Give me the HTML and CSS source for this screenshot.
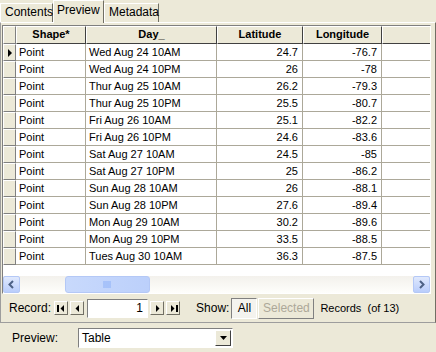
FILE: index.html
```html
<!DOCTYPE html>
<html>
<head>
<meta charset="utf-8">
<link rel="stylesheet" href="styles.css">
</head>
<body>
<div class="tabs">
  <div class="tab">Contents</div>
  <div class="tab sel">Preview</div>
  <div class="tab">Metadata</div>
</div>
<div class="panel">
  <div class="grid">
    <div class="row head">
      <div class="sc hc"></div>
      <div class="hc">Shape*</div>
      <div class="hc">Day_</div>
      <div class="hc">Latitude</div>
      <div class="hc">Longitude</div>
      <div class="hc"></div>
    </div>
    <div class="row"><div class="sc cur"><span class="tri"></span></div><div class="c">Point</div><div class="c">Wed Aug 24 10AM</div><div class="c n">24.7</div><div class="c n">-76.7</div><div class="c"></div></div>
    <div class="row"><div class="sc"></div><div class="c">Point</div><div class="c">Wed Aug 24 10PM</div><div class="c n">26</div><div class="c n">-78</div><div class="c"></div></div>
    <div class="row"><div class="sc"></div><div class="c">Point</div><div class="c">Thur Aug 25 10AM</div><div class="c n">26.2</div><div class="c n">-79.3</div><div class="c"></div></div>
    <div class="row"><div class="sc"></div><div class="c">Point</div><div class="c">Thur Aug 25 10PM</div><div class="c n">25.5</div><div class="c n">-80.7</div><div class="c"></div></div>
    <div class="row"><div class="sc"></div><div class="c">Point</div><div class="c">Fri Aug 26 10AM</div><div class="c n">25.1</div><div class="c n">-82.2</div><div class="c"></div></div>
    <div class="row"><div class="sc"></div><div class="c">Point</div><div class="c">Fri Aug 26 10PM</div><div class="c n">24.6</div><div class="c n">-83.6</div><div class="c"></div></div>
    <div class="row"><div class="sc"></div><div class="c">Point</div><div class="c">Sat Aug 27 10AM</div><div class="c n">24.5</div><div class="c n">-85</div><div class="c"></div></div>
    <div class="row"><div class="sc"></div><div class="c">Point</div><div class="c">Sat Aug 27 10PM</div><div class="c n">25</div><div class="c n">-86.2</div><div class="c"></div></div>
    <div class="row"><div class="sc"></div><div class="c">Point</div><div class="c">Sun Aug 28 10AM</div><div class="c n">26</div><div class="c n">-88.1</div><div class="c"></div></div>
    <div class="row"><div class="sc"></div><div class="c">Point</div><div class="c">Sun Aug 28 10PM</div><div class="c n">27.6</div><div class="c n">-89.4</div><div class="c"></div></div>
    <div class="row"><div class="sc"></div><div class="c">Point</div><div class="c">Mon Aug 29 10AM</div><div class="c n">30.2</div><div class="c n">-89.6</div><div class="c"></div></div>
    <div class="row"><div class="sc"></div><div class="c">Point</div><div class="c">Mon Aug 29 10PM</div><div class="c n">33.5</div><div class="c n">-88.5</div><div class="c"></div></div>
    <div class="row"><div class="sc"></div><div class="c">Point</div><div class="c">Tues Aug 30 10AM</div><div class="c n">36.3</div><div class="c n">-87.5</div><div class="c"></div></div>
    <div class="filler"></div>
    <div class="hscroll">
      <div class="sbtn"><svg width="15" height="15" viewBox="0 0 15 15"><path d="M9 4 L5.5 7.5 L9 11" fill="none" stroke="#4d6185" stroke-width="2"/></svg></div>
      <div class="track">
        <div class="thumb"><svg width="9" height="7" viewBox="0 0 9 7"><path d="M1 0v7M3 0v7M5 0v7M7 0v7" stroke="#8cb0f8" stroke-width="1"/></svg></div>
      </div>
      <div class="sbtn"><svg width="15" height="15" viewBox="0 0 15 15"><path d="M6 4 L9.5 7.5 L6 11" fill="none" stroke="#4d6185" stroke-width="2"/></svg></div>
    </div>
  </div>
  <div class="nav">
    <span class="lbl">Record:</span>
    <div class="nb"><svg width="9" height="7" viewBox="0 0 9 7"><rect x="0" y="0" width="2" height="7" fill="#000"/><path d="M7 0 L3.5 3.5 L7 7Z" fill="#000"/></svg></div>
    <div class="nb"><svg width="9" height="7" viewBox="0 0 9 7"><path d="M6 0 L2.5 3.5 L6 7Z" fill="#000"/></svg></div>
    <div class="rec">1</div>
    <div class="nb"><svg width="9" height="7" viewBox="0 0 9 7"><path d="M3 0 L6.5 3.5 L3 7Z" fill="#000"/></svg></div>
    <div class="nb"><svg width="9" height="7" viewBox="0 0 9 7"><path d="M2 0 L5.5 3.5 L2 7Z" fill="#000"/><rect x="7" y="0" width="2" height="7" fill="#000"/></svg></div>
    <span class="lbl show">Show:</span>
    <div class="btn pressed">All</div>
    <div class="btn dis">Selected</div>
    <span class="lbl recs">Records&nbsp; (of 13)</span>
  </div>
</div>
<div class="prev">
  <span class="plbl">Preview:</span>
  <div class="combo">
    <span class="ctext">Table</span>
    <div class="cbtn"><svg width="7" height="4" viewBox="0 0 7 4"><path d="M0 0 H7 L3.5 4Z" fill="#000"/></svg></div>
  </div>
</div>
</body>
</html>
```

FILE: styles.css
```css
* { box-sizing: border-box; }
html, body { margin: 0; padding: 0; }
body {
  width: 436px;
  height: 352px;
  overflow: hidden;
  background: #ece9d8;
  font-family: "Liberation Sans", Arial, sans-serif;
  font-size: 11px;
  color: #000;
}
.tabs {
  display: flex;
  height: 22px;
  align-items: flex-end;
  padding-left: 0;
  position: relative;
  z-index: 1;
}
.tab {
  height: 19px;
  line-height: 17px;
  padding: 0 4px;
  border-top: 1px solid #fff;
  border-left: 1px solid #fff;
  border-right: 1px solid #716f64;
  background: #ece9d8;
  font-size: 12px;
}
.tab:first-child { width: 53px; }
.tab.sel {
  height: 23px;
  margin-bottom: -1px;
  line-height: 19px;
  width: 51px;
  padding: 0 3px;
}
.tab:last-child { width: 55px; }
.panel {
  width: 436px;
  height: 301px;
  border-top: 1px solid #fff;
  border-left: 1px solid #9d9d9d;
  border-right: 1px solid #716f64;
  border-bottom: 1px solid #9d9d9d;
  padding: 2px 4px 0 1px;
}
.grid {
  width: 429px;
  height: 269px;
  border-top: 1px solid #7f7f7f;
  border-left: 1px solid #7f7f7f;
  border-right: 1px solid #fff;
  border-bottom: 1px solid #fff;
  background: #fff;
  display: flex;
  flex-direction: column;
}
.row {
  display: grid;
  grid-template-columns: 13px 70px 131px 86px 79px 1fr;
  height: 17px;
}
.row.head { height: 18px; }
.hc {
  background: #ece9d8;
  border-top: 1px solid #fff;
  border-left: 1px solid #fff;
  border-right: 1px solid #404040;
  border-bottom: 1px solid #404040;
  font-weight: bold;
  text-align: center;
  line-height: 15px;
  font-size: 11px;
}
.hc:last-child { border-right: none; }
.sc {
  background: #ece9d8;
  border-top: 1px solid #fff;
  border-left: 1px solid #fff;
  border-right: 1px solid #808080;
  border-bottom: 1px solid #808080;
  display: flex;
  align-items: center;
  justify-content: center;
}
.tri {
  width: 0; height: 0;
  border-top: 4px solid transparent;
  border-bottom: 4px solid transparent;
  border-left: 4px solid #000;
}
.c {
  border-right: 1px solid #aca899;
  border-bottom: 1px solid #aca899;
  padding: 0 3px;
  line-height: 16px;
  white-space: nowrap;
  overflow: hidden;
}
.c:last-child { border-right: none; }
.c.n { text-align: right; padding-right: 4px; }
.filler { height: 11px; flex: none; }
.hscroll {
  height: 17px;
  display: flex;
  background: linear-gradient(#f3f1ec, #fefefb);
}
.sbtn {
  width: 17px;
  height: 17px;
  border: 1px solid #b4c8f6;
  border-radius: 2px;
  background: linear-gradient(#e0e9fd, #b9cdfb);
  display: flex;
  align-items: center;
  justify-content: center;
}
.track {
  flex: 1;
  display: flex;
  align-items: stretch;
  padding-left: 45px;
}
.thumb {
  width: 85px;
  border: 1px solid #b4c8f6;
  border-radius: 3px;
  background: linear-gradient(90deg, #c8d9fc, #bcd0fb);
  display: flex;
  align-items: center;
  justify-content: center;
}
.nav {
  height: 28px;
  display: flex;
  align-items: center;
  padding-left: 7px;
}
.lbl { font-size: 12px; white-space: nowrap; }
.nb {
  width: 14px;
  height: 14px;
  margin-left: 2px;
  border-top: 1px solid #fff;
  border-left: 1px solid #fff;
  border-right: 1px solid #716f64;
  border-bottom: 1px solid #716f64;
  display: flex;
  align-items: center;
  justify-content: center;
}
.nav .lbl:first-child { margin-right: 1px; }
.rec {
  width: 61px;
  height: 19px;
  margin-left: 3px;
  background: #fff;
  border-top: 1px solid #7f7f7f;
  border-left: 1px solid #7f7f7f;
  border-right: 1px solid #fff;
  border-bottom: 1px solid #fff;
  text-align: right;
  padding-right: 4px;
  line-height: 17px;
  font-size: 12px;
}
.show { margin-left: 16px; margin-right: 2px; }
.btn {
  height: 21px;
  line-height: 19px;
  text-align: center;
  font-size: 12px;
}
.btn.pressed {
  width: 26px;
  background: #f4f3ee;
  border-top: 1px solid #808080;
  border-left: 1px solid #808080;
  border-right: 1px solid #fff;
  border-bottom: 1px solid #fff;
}
.btn.dis {
  width: 56px;
  margin-left: 1px;
  color: #aca899;
  border-top: 1px solid #fff;
  border-left: 1px solid #fff;
  border-right: 1px solid #808080;
  border-bottom: 1px solid #808080;
}
.recs { margin-left: 6px; font-size: 11px; }
.prev {
  height: 29px;
  display: flex;
  align-items: center;
  padding-left: 12px;
}
.plbl { width: 66px; font-size: 12px; }
.combo {
  width: 155px;
  height: 20px;
  background: #fff;
  border-top: 1px solid #7f7f7f;
  border-left: 1px solid #7f7f7f;
  border-right: 1px solid #fff;
  border-bottom: 1px solid #fff;
  display: flex;
  align-items: center;
  padding: 1px;
}
.ctext { flex: 1; padding-left: 2px; font-size: 12px; }
.cbtn {
  width: 16px;
  height: 16px;
  background: #ece9d8;
  border-top: 1px solid #fff;
  border-left: 1px solid #fff;
  border-right: 1px solid #404040;
  border-bottom: 1px solid #404040;
  display: flex;
  align-items: center;
  justify-content: center;
}
```
